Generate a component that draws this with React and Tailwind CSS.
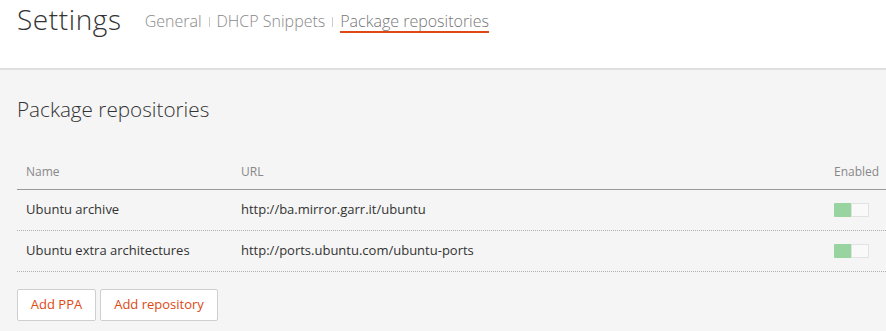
import React from "react";

const font = { fontFamily: '"Open Sans", "Noto Sans", sans-serif' };

function Toggle() {
  return (
    <div className="flex h-[14px] w-[35px]">
      <div className="h-full w-[17px] rounded-l-[1px] bg-[#98d49f]" />
      <div className="h-full flex-1 border border-[#e2e2e2] bg-[#f9f9f9]" />
    </div>
  );
}

const rows = [
  { name: "Ubuntu archive", url: "http://ba.mirror.garr.it/ubuntu" },
  { name: "Ubuntu extra architectures", url: "http://ports.ubuntu.com/ubuntu-ports" },
];

export default function App() {
  return (
    <div className="h-[331px] w-[886px] overflow-hidden bg-[#f5f5f5] text-[#333]" style={font}>
      <header className="flex h-[70px] items-start border-b-2 border-[#e0e0e0] bg-white pl-[17px]">
        <h1 className="mt-[-1px] text-[28px] font-light leading-[40px] tracking-[0.6px] text-[#333]">Settings</h1>
        <nav className="ml-[23px] mt-[11px] flex items-start text-[16px] font-light text-[#888]">
          <span className="leading-[20px]">General</span>
          <span className="mx-[7px] mt-[6px] h-[10px] w-px bg-[#ccc]" />
          <span className="leading-[20px]">DHCP Snippets</span>
          <span className="mx-[7px] mt-[6px] h-[10px] w-px bg-[#ccc]" />
          <span className="border-b-2 border-[#dd4814] leading-[20px] text-[#777]">Package repositories</span>
        </nav>
      </header>
      <main className="pl-[17px] pt-[24px]">
        <h2 className="text-[20.7px] font-light leading-[30px] text-[#333]">Package repositories</h2>
        <div className="mt-[39px]">
          <div className="grid grid-cols-[215px_593px_1fr] border-b border-[#999] pb-[8px] pl-[9px] text-[12px] leading-[18px] text-[#888]">
            <div>Name</div>
            <div>URL</div>
            <div>Enabled</div>
          </div>
          {rows.map((r) => (
            <div
              key={r.name}
              className="grid h-[41px] grid-cols-[215px_593px_1fr] items-center border-b border-dotted border-[#b0b0b0] pl-[9px] text-[13px] text-[#333]"
            >
              <div>{r.name}</div>
              <div>{r.url}</div>
              <div>
                <Toggle />
              </div>
            </div>
          ))}
        </div>
        <div className="mt-[17px] flex gap-[4px]">
          <button className="h-[32px] w-[79px] rounded-[2px] border border-[#cfcfcf] bg-white text-[13px] text-[#dd4814]">
            Add PPA
          </button>
          <button className="h-[32px] w-[118px] rounded-[2px] border border-[#cfcfcf] bg-white text-[13px] text-[#dd4814]">
            Add repository
          </button>
        </div>
      </main>
    </div>
  );
}
